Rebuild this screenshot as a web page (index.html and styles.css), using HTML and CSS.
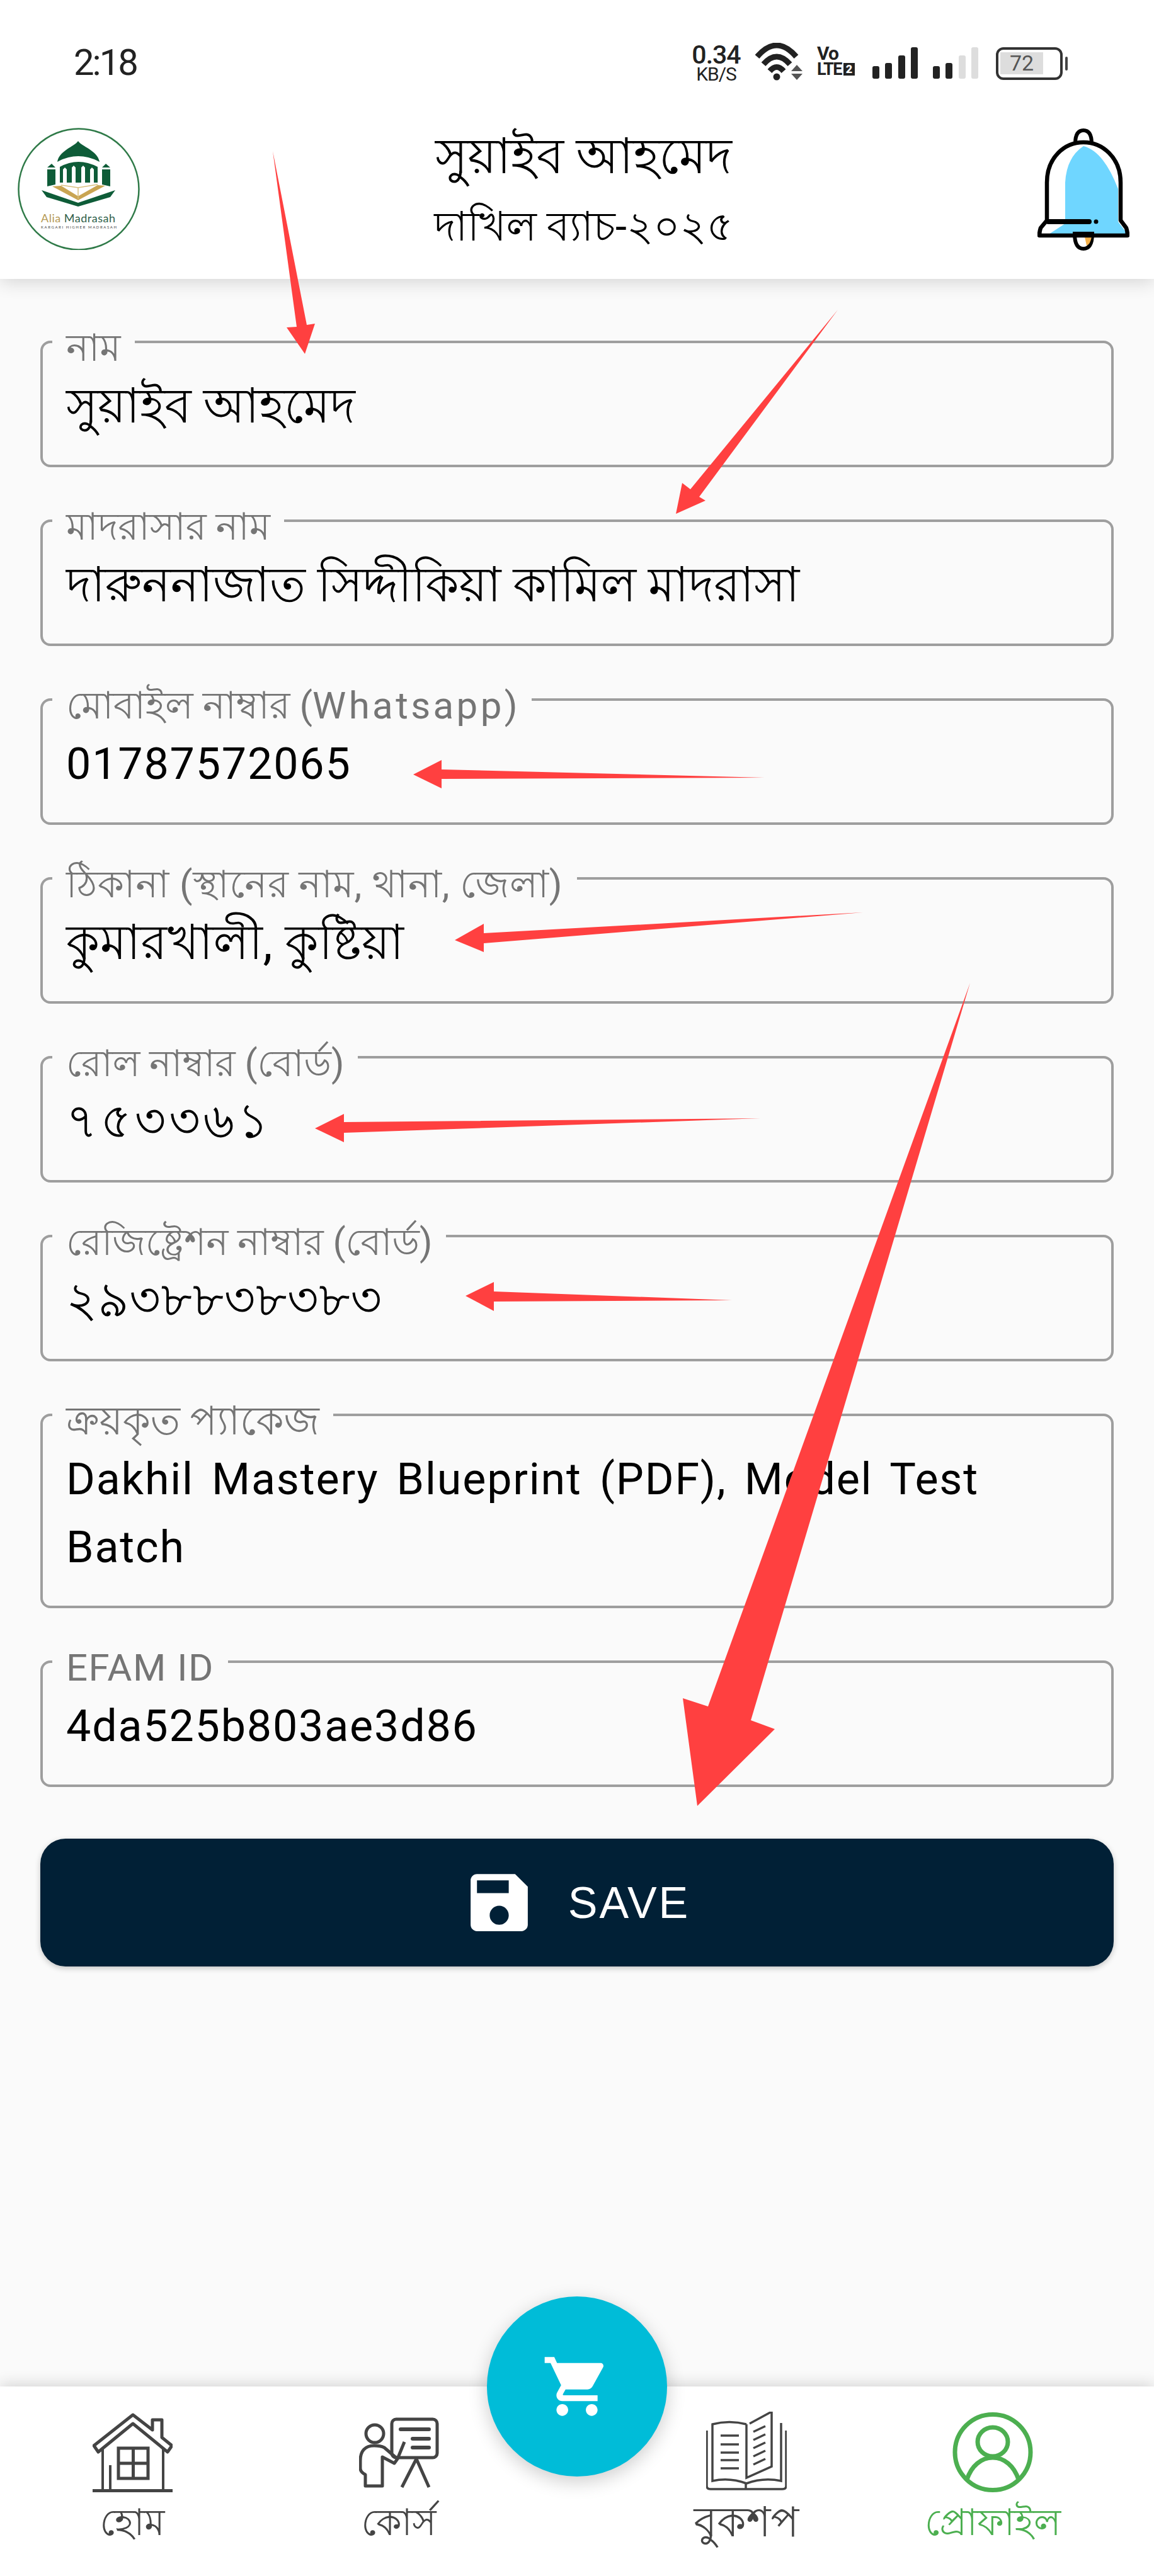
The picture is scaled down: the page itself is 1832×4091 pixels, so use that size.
FILE: index.html
```html
<!DOCTYPE html>
<html lang="bn">
<head>
<meta charset="utf-8">
<title>প্রোফাইল</title>
<link rel="stylesheet" href="styles.css">
</head>
<body>
<div class="screen">
  <header class="appbar">
    <div class="statusbar">
      <span class="clock">2:18</span>
      <div class="status-icons">
        <div class="netspeed"><span class="speed">0.34</span><span class="unit">KB/S</span></div>
        <svg class="wifi" viewBox="1198 68 76 62" width="76" height="62">
          <path d="M1201 90Q1232 54 1263 90M1211 102Q1232 78 1253 102M1221 113Q1232 100 1243 113" fill="none" stroke="#222" stroke-width="9"/>
          <circle cx="1232" cy="122" r="5.5" fill="#222"/>
          <path d="M1264 103l9 10h-18zM1264 127l9-10h-18z" fill="#555"/>
        </svg>
        <div class="volte"><span class="vo">Vo</span><span class="lte">LTE<b class="sim">2</b></span></div>
        <svg class="signal" viewBox="0 0 72 50" width="72" height="50">
          <rect x="0" y="30" width="11" height="20" rx="3" fill="#222"/><rect x="20" y="25" width="11" height="25" rx="3" fill="#222"/><rect x="41" y="13" width="11" height="37" rx="3" fill="#222"/><rect x="61" y="0" width="11" height="50" rx="3" fill="#222"/>
        </svg>
        <svg class="signal" viewBox="0 0 72 50" width="72" height="50">
          <rect x="0" y="30" width="11" height="20" rx="3" fill="#222"/><rect x="20" y="25" width="11" height="25" rx="3" fill="#222"/><rect x="41" y="13" width="11" height="37" rx="3" fill="#ddd"/><rect x="61" y="0" width="11" height="50" rx="3" fill="#ddd"/>
        </svg>
        <div class="battery"><div class="battery-shell"><span class="battery-level">72</span></div><i class="battery-nub"></i></div>
      </div>
    </div>
    <div class="titlebar">
      <svg class="logo" viewBox="0 0 194 194" width="194" height="194">
        <ellipse cx="97" cy="97.5" rx="95.5" ry="96" fill="#fff" stroke="#2f7a48" stroke-width="2.5"/>
        <path d="M96 21C90 30 66 36 63 54Q96 36 130 54C127 36 102 30 96 21Z" fill="#0e5c38"/>
        <path d="M67 87V62Q96 46 127 62V87Z" fill="#0e5c38"/>
        <path d="M72 87V66l3-3 3 3V87ZM86 87V63l3-3 3 3V87ZM101 87V63l3-3 3 3V87ZM115 87V66l3-3 3 3V87Z" fill="#fff"/>
        <path d="M47 63l7-6 6 6ZM47 66h13v24l-13 3ZM134 63l6-6 7 6ZM134 66h13v27l-13-3Z" fill="#0e5c38"/>
        <path d="M55 93L96 115L139 92L127 91L97 108H95L69 92Z" fill="#c9a552"/>
        <path d="M69 91L96 95L127 90M96 95V113" fill="none" stroke="#d9c07e" stroke-width="1.5"/>
        <path d="M38 99L96 119L155 99L147 110L96 125L46 110Z" fill="#0e5c38"/>
        <text class="logo-name" x="37" y="150" textLength="118"><tspan fill="#b59a55">Alia </tspan><tspan fill="#2f5f4a">Madrasah</tspan></text>
        <text class="logo-sub" x="37" y="160" textLength="120">KARGARI HIGHER MADRASAH</text>
      </svg>
      <div class="title">
        <h1 class="title-name">সুয়াইব আহমেদ</h1>
        <p class="title-batch">দাখিল ব্যাচ-২০২৫</p>
      </div>
      <svg class="bell" viewBox="1647 203 146 195" width="146" height="195">
        <path d="M1691 355V290Q1693 250 1720 232Q1752 240 1775 300V352L1790 372H1665L1691 355Z" fill="#6fd6ff"/>
        <path d="M1706 371q0 24 14 24t14-24z" fill="#fff" stroke="#000" stroke-width="6"/>
        <path d="M1722 376h11q-2 12-8 14z" fill="#f6b24a"/>
        <path d="M1707 228q0-21 13-21t13 21" fill="#fff" stroke="#000" stroke-width="6"/>
        <path d="M1662 350V290C1662 250 1690 226 1720 226S1779 250 1779 290V350L1788 362Q1790 368 1790 374H1650Q1650 368 1652 362Z" fill="none" stroke="#000" stroke-width="6.5" stroke-linejoin="round"/>
        <path d="M1664 352H1729" stroke="#000" stroke-width="8" stroke-linecap="round"/>
        <circle cx="1740" cy="352" r="3.5" fill="#000"/>
      </svg>
    </div>
  </header>

  <main class="form">
    <fieldset class="field"><legend class="field-label">নাম</legend><div class="field-value value-bn">সুয়াইব আহমেদ</div></fieldset>
    <fieldset class="field"><legend class="field-label">মাদরাসার নাম</legend><div class="field-value value-bn">দারুননাজাত সিদ্দীকিয়া কামিল মাদরাসা</div></fieldset>
    <fieldset class="field"><legend class="field-label">মোবাইল নাম্বার (<span class="latin-wide">Whatsapp</span>)</legend><div class="field-value">01787572065</div></fieldset>
    <fieldset class="field"><legend class="field-label label-spaced">ঠিকানা (স্থানের নাম, থানা, জেলা)</legend><div class="field-value value-bn value-address">কুমারখালী, কুষ্টিয়া</div></fieldset>
    <fieldset class="field"><legend class="field-label label-tight">রোল নাম্বার (বোর্ড)</legend><div class="field-value value-bn value-roll">৭৫৩৩৬১</div></fieldset>
    <fieldset class="field"><legend class="field-label label-tight">রেজিষ্ট্রেশন নাম্বার (বোর্ড)</legend><div class="field-value value-bn value-reg">২৯৩৮৮৩৮৩৮৩</div></fieldset>
    <fieldset class="field"><legend class="field-label label-package">ক্রয়কৃত প্যাকেজ</legend><div class="field-value value-latin">Dakhil Mastery Blueprint (PDF), Model Test Batch</div></fieldset>
    <fieldset class="field"><legend class="field-label label-latin">EFAM ID</legend><div class="field-value">4da525b803ae3d86</div></fieldset>
    <button class="save" type="button">
      <svg class="save-icon" viewBox="0 0 24 24" width="121" height="121"><path fill="#fff" d="M17 3H5c-1.11 0-2 .9-2 2v14c0 1.1.89 2 2 2h14c1.1 0 2-.9 2-2V7l-4-4zm-5 16c-1.66 0-3-1.34-3-3s1.34-3 3-3 3 1.34 3 3-1.34 3-3 3zm3-10H5V5h10v4z"/></svg>
      <span class="save-text">SAVE</span>
    </button>
  </main>

  <nav class="bottomnav">
    <a class="nav-item">
      <svg class="nav-icon" viewBox="145 3830 127 130" width="127" height="130" fill="none" stroke="#444">
        <path d="M209 3835L147 3884L154 3894L209 3849L264 3894L271 3884L255 3871V3843H240V3859Z" stroke-width="5" stroke-linejoin="round"/>
        <path d="M161 3888V3955M257 3888V3955M173 3955V3915" stroke-width="4"/>
        <path d="M145 3955.5H272" stroke-width="5"/>
        <path d="M186 3888H233V3936H186ZM209.5 3888V3936M186 3912H233" stroke-width="5"/>
      </svg>
      <span class="nav-label">হোম</span>
    </a>
    <a class="nav-item">
      <svg class="nav-icon" viewBox="570 3830 127 130" width="127" height="130" fill="none" stroke="#444">
        <rect x="622" y="3842" width="72" height="61" rx="7" stroke-width="5"/>
        <path d="M636 3858H681M655 3873H681M655 3887H681" stroke-width="6" stroke-linecap="round"/>
        <ellipse cx="595" cy="3865" rx="14" ry="14" stroke-width="5"/>
        <path d="M594 3884C580 3884 572 3892 572 3908V3920Q572 3926 580 3930V3948H607V3902L626 3912L631 3905L610 3887Q604 3884 594 3884ZM631 3905L642 3878" stroke-width="5" stroke-linejoin="round"/>
        <path d="M661 3905L638 3950M661 3905L681 3950" stroke-width="5"/>
      </svg>
      <span class="nav-label">কোর্স</span>
    </a>
    <span class="nav-gap"></span>
    <a class="nav-item">
      <svg class="nav-icon" viewBox="1121 3830 128 130" width="128" height="130" fill="none" stroke="#444" stroke-width="3.5">
        <path d="M1185 3850Q1158 3843 1131 3850V3940Q1158 3934 1185 3944Q1212 3934 1240 3940V3848M1190 3849L1225 3830V3917L1185 3935V3850"/>
        <path d="M1122 3860V3948Q1122 3953 1128 3953H1242Q1248 3953 1248 3948V3860M1184 3942V3953"/>
        <path d="M1144 3868H1173M1144 3882H1173M1144 3895H1173M1144 3907H1173M1144 3920H1173M1196 3862L1215 3853M1196 3875L1215 3866M1196 3888L1215 3879M1196 3901L1215 3892M1196 3914L1215 3905"/>
      </svg>
      <span class="nav-label nav-label-wide">বুকশপ</span>
    </a>
    <a class="nav-item nav-active">
      <svg class="nav-icon" viewBox="1512 3830 128 130" width="128" height="130" fill="none" stroke="#4caf50" stroke-width="7">
        <circle cx="1576" cy="3894.5" r="60"/>
        <ellipse cx="1576" cy="3878" rx="24" ry="23"/>
        <path d="M1535 3938C1542 3916 1558 3903 1576 3903S1610 3916 1617 3938"/>
      </svg>
      <span class="nav-label">প্রোফাইল</span>
    </a>
    <button class="fab" type="button">
      <svg viewBox="0 0 24 24" width="112" height="112"><path fill="#fff" d="M7 18c-1.1 0-1.99.9-1.99 2S5.9 22 7 22s2-.9 2-2-.9-2-2-2zM1 2v2h2l3.6 7.59-1.35 2.45c-.16.28-.25.61-.25.96 0 1.1.9 2 2 2h12v-2H7.42c-.14 0-.25-.11-.25-.25l.03-.12.9-1.63h7.45c.75 0 1.41-.41 1.75-1.03l3.58-6.49c.08-.14.12-.31.12-.48 0-.55-.45-1-1-1H5.21l-.94-2H1zm16 16c-1.1 0-1.99.9-1.99 2s.89 2 1.99 2 2-.9 2-2-.9-2-2-2z"/></svg>
    </button>
  </nav>

  <svg class="annotations" viewBox="0 0 1832 4091" width="1832" height="4091">
    <polygon points="433,240 487,516 500,514 484,562 455,520 471,519"/>
    <polygon points="1330,492 1110,789 1120,795 1073,816 1083,767 1096,777"/>
    <polygon points="1214,1235 701,1237 701,1252 656,1230 701,1207 701,1222"/>
    <polygon points="1370,1449 768,1498 768,1512 722,1493 768,1467 768,1482"/>
    <polygon points="1207,1776 546,1799 546,1814 500,1792 546,1769 546,1782"/>
    <polygon points="1162,2065 784,2067 784,2082 739,2058 784,2036 784,2051"/>
    <polygon points="1540,1561 1192,2732 1230,2746 1107,2868 1084,2697 1124,2710"/>
  </svg>
</div>
</body>
</html>
```
FILE: styles.css
```css
* { box-sizing: border-box; }
html, body { margin: 0; padding: 0; }
body { font-family: Roboto, "Lohit Bengali", serif; background: #fafafa; }
.screen { position: relative; width: 1832px; height: 4091px; overflow: hidden; display: flex; flex-direction: column; background: #fafafa; }

.appbar { background: #fff; height: 443px; box-shadow: 0 4px 28px rgba(0,0,0,.16); position: relative; z-index: 1; flex: none; }
.statusbar { height: 170px; display: flex; justify-content: space-between; align-items: flex-start; padding: 70px 137px 0 117px; color: #222; }
.clock { font-size: 58px; line-height: 58px; letter-spacing: -3px; }
.status-icons { display: flex; align-items: flex-start; }
.netspeed { width: 84px; display: flex; flex-direction: column; align-items: center; font-size: 41px; line-height: 34px; letter-spacing: -1px; }
.speed { font-weight: 500; }
.unit { font-size: 30px; line-height: 28px; letter-spacing: -1px; }
.wifi { margin-left: 20px; margin-top: -2px; }
.volte { margin-left: 22px; margin-top: 2px; width: 62px; display: flex; flex-direction: column; font-weight: 700; }
.vo { font-size: 30px; line-height: 26px; letter-spacing: -1px; }
.lte { font-size: 27px; line-height: 24px; letter-spacing: -1.5px; display: flex; align-items: center; }
.sim { margin-left: 3px; background: #222; color: #fff; font-size: 18px; line-height: 20px; width: 18px; text-align: center; letter-spacing: 0; }
.signal { margin-left: 26px; margin-top: 5px; }
.signal + .signal { margin-left: 24px; }
.battery { margin-left: 28px; margin-top: 5px; display: flex; align-items: center; }
.battery-shell { width: 106px; height: 52px; border: 4px solid #333; border-radius: 12px; padding: 4px 27px 5px 3px; }
.battery-level { display: block; height: 100%; background: #ddd; color: #555; font-size: 34px; line-height: 35px; text-align: center; }
.battery-nub { width: 4px; height: 22px; background: #444; margin-left: 4px; border-radius: 2px; }

.titlebar { display: flex; align-items: flex-start; padding: 33px 39px 0 28px; }
.logo { flex: none; }
.logo-name { font-family: Lato, sans-serif; font-size: 18px; }
.logo-sub { font-family: Lato, sans-serif; font-size: 6px; fill: #444; }
.title { flex: 1; text-align: center; padding-right: 16px; color: #000; }
.title-name { margin: -4px 0 0; font-weight: 400; font-size: 78px; line-height: 100px; }
.title-batch { margin: 21px 0 0; font-size: 65px; line-height: 80px; }
.bell { flex: none; }

.form { flex: 1; display: flex; flex-direction: column; gap: 71px; padding: 86px 64px 0; }
.field { margin: 0; min-width: 0; border: 4px solid #9e9e9e; border-radius: 16px; padding: 34px 60px 39px 37px; background: transparent; }
.field-label { height: 28px; margin-left: -22px; padding: 20px 22px 0; font-size: 60px; line-height: 8px; color: #757575; white-space: nowrap; }
.latin-wide { letter-spacing: 4.4px; }
.label-latin { letter-spacing: 1.5px; }
.label-spaced { letter-spacing: .8px; }
.label-tight { font-size: 59px; }
.label-package { font-size: 63px; }
.field-value { font-size: 70px; line-height: 108px; letter-spacing: 1.8px; color: #000; }
.value-bn { font-size: 76px; letter-spacing: 0; }
.value-address { letter-spacing: .6px; }
.value-roll { letter-spacing: 5px; }
.value-reg { letter-spacing: .8px; }
.value-latin { word-spacing: 9px; }

.save { margin-top: 11px; height: 203px; border: 0; border-radius: 40px; background: #012036; display: flex; align-items: center; justify-content: center; gap: 49px; box-shadow: 0 3px 10px rgba(0,0,0,.22); padding: 0 5px 0 0; flex: none; }
.save-text { color: #fff; font-family: inherit; font-size: 70px; letter-spacing: 3px; }

.bottomnav { position: relative; z-index: 2; flex: none; height: 301px; background: #fff; display: grid; grid-template-columns: 420px 426px 154px 370px 412px 50px; box-shadow: 0 -3px 22px rgba(0,0,0,.16); }
.nav-item { display: flex; flex-direction: column; align-items: center; color: #444; padding-top: 40px; }
.nav-label { font-size: 58px; line-height: 80px; margin-top: 6px; }
.nav-label-wide { font-size: 66px; }
.nav-active { color: #4caf50; }
.fab { position: absolute; left: 773px; top: -143px; width: 286px; height: 286px; border: 0; padding: 0; border-radius: 50%; background: #00bcd8; display: flex; align-items: center; justify-content: center; box-shadow: 0 8px 30px rgba(0,0,0,.2); }

.annotations { position: absolute; left: 0; top: 0; z-index: 3; pointer-events: none; }
.annotations polygon { fill: #ff4040; }
```
